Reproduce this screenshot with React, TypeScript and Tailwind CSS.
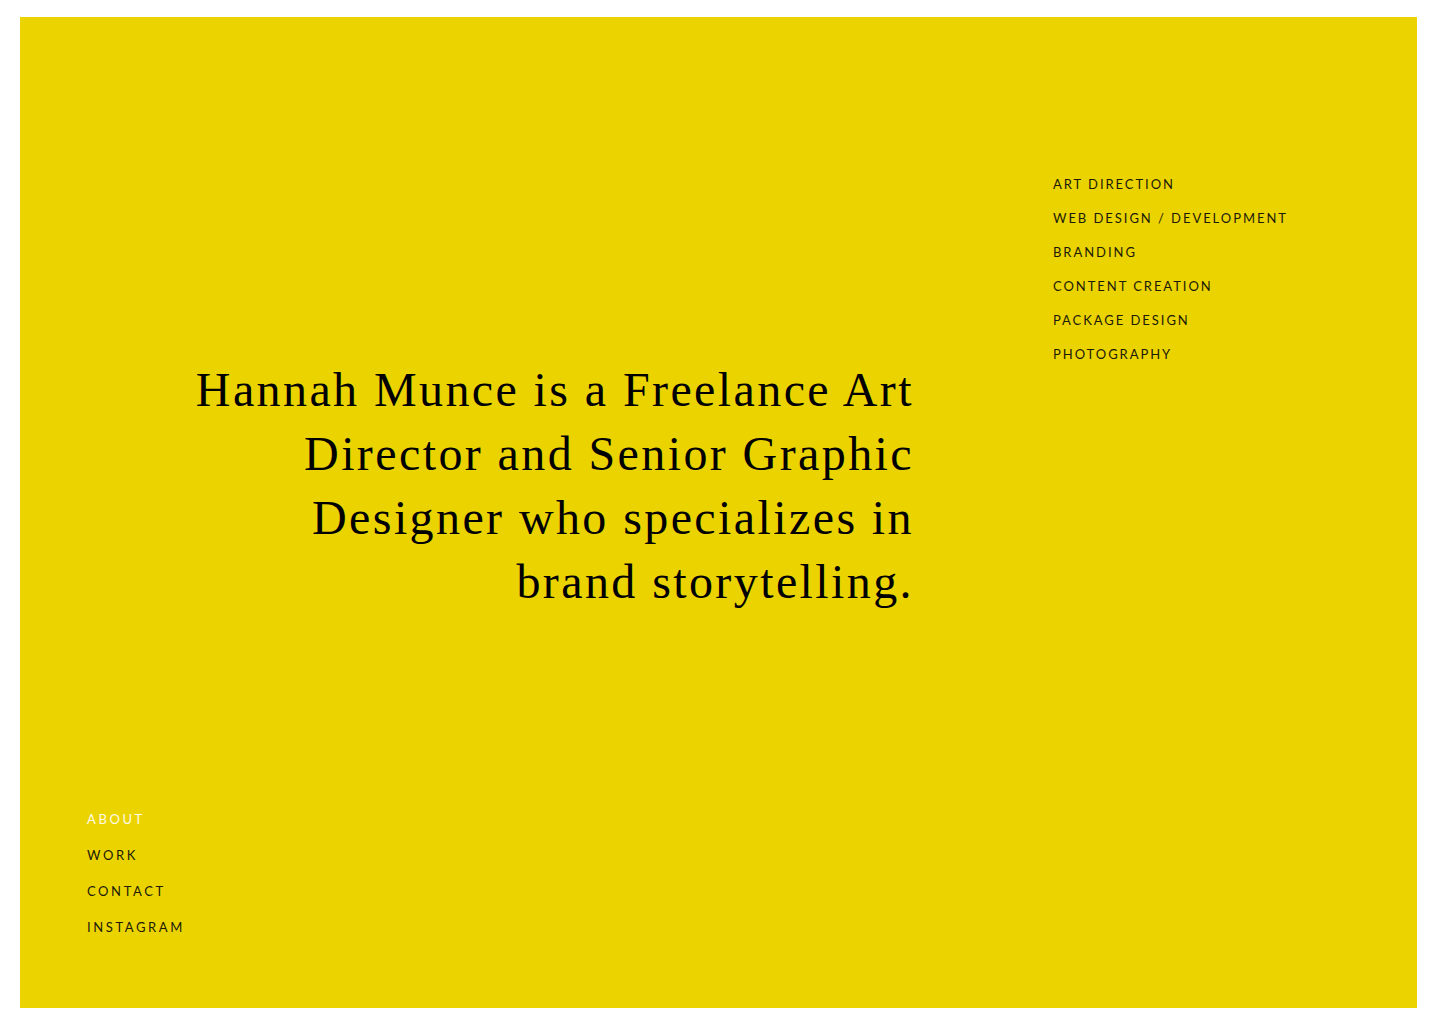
const services = [
  "Art Direction",
  "Web Design / Development",
  "Branding",
  "Content Creation",
  "Package Design",
  "Photography",
];

const nav = [
  { label: "About", active: true },
  { label: "Work" },
  { label: "Contact" },
  { label: "Instagram" },
];

export default function App() {
  return (
    <div className="min-h-screen bg-white pt-[17px] pl-[20px]">
      <section className="w-[1397px] h-[991px] bg-[#ebd300] flex flex-col justify-between pt-[150px] pb-[63px]">
        <div className="flex">
          <div className="w-[894px] shrink-0 mt-[191px]">
            <h1 className="text-right font-['Liberation_Serif',serif] text-[48px] leading-[64px] tracking-[0.05em] text-black pl-[160px]">
              Hannah Munce is a Freelance Art Director and Senior Graphic Designer who specializes in brand storytelling.
            </h1>
          </div>
          <ul className="ml-[139px] font-['Lato',sans-serif] text-[13px] leading-[34px] tracking-[0.15em] uppercase text-[#1c1a0a]">
            {services.map((s) => (
              <li key={s}>{s}</li>
            ))}
          </ul>
        </div>
        <nav className="pl-[67px] flex flex-col font-['Lato',sans-serif] text-[13px] leading-[36px] tracking-[0.2em] uppercase">
          {nav.map((n) => (
            <a
              key={n.label}
              href="#"
              className={n.active ? "text-[#fffbe6]" : "text-[#1c1a0a]"}
            >
              {n.label}
            </a>
          ))}
        </nav>
      </section>
    </div>
  );
}
